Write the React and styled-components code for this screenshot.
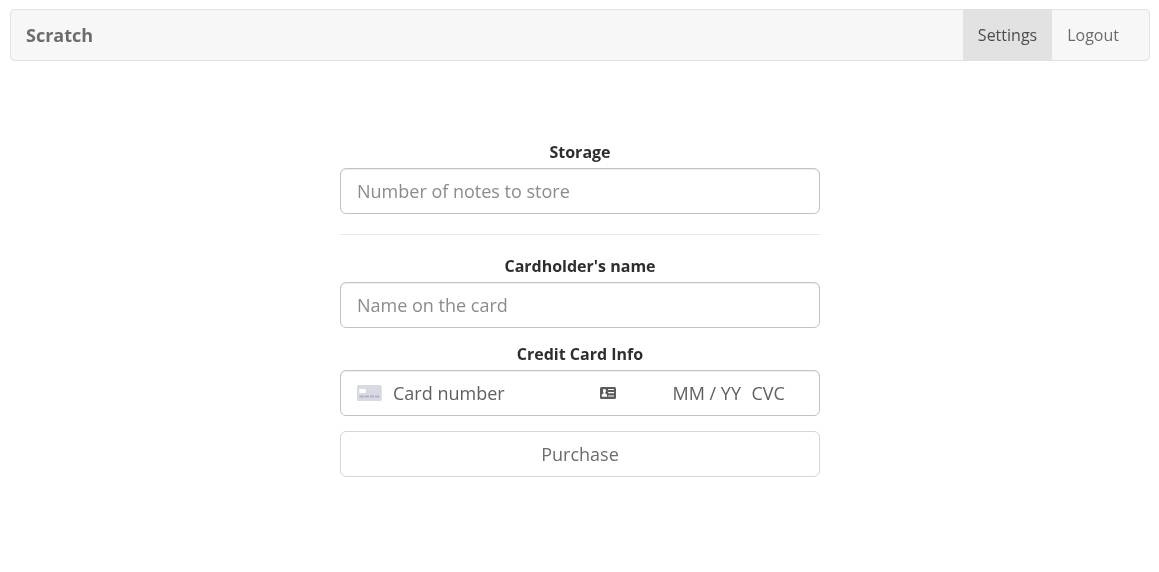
import React from "react";
import styled, { createGlobalStyle } from "styled-components";

const Global = createGlobalStyle`
  * { box-sizing: border-box; }
  body {
    margin: 0;
    background: #fff;
    color: #2e2e2e;
    font: 16px/23px "Open Sans", sans-serif;
    -webkit-font-smoothing: antialiased;
  }
`;
const Page = styled.div`
  padding: 9px 9px 0 10px;
  will-change: transform;
`;
const Navbar = styled.nav`
  display: flex;
  height: 52px;
  padding: 0 15px;
  border: 1px solid #e2e2e2;
  border-radius: 4px;
  background: #f7f7f7;
`;
const Brand = styled.a`
  margin-right: auto;
  line-height: 50px;
  font-size: 18px;
  font-weight: 700;
  color: #6c6c6c;
`;
const NavItem = styled.a`
  padding: 0 15px;
  line-height: 50px;
  color: ${(p) => (p.$active ? "#4c4c4c" : "#6c6c6c")};
  background: ${(p) => (p.$active ? "#e2e2e2" : "transparent")};
`;
const Form = styled.form`
  width: 480px;
  margin: 80px auto 0;
`;
const Group = styled.div`
  margin-bottom: 15px;
`;
const Label = styled.label`
  display: block;
  height: 22px;
  margin-bottom: 5px;
  line-height: 22px;
  font-weight: 700;
  text-align: center;
`;
const Input = styled.input`
  display: block;
  width: 100%;
  height: 46px;
  padding: 10px 16px;
  border: 1px solid #c2c2c2;
  border-radius: 6px;
  font: 18px/24px "Open Sans", sans-serif;
  box-shadow: inset 0 1px 1px rgba(0, 0, 0, 0.075);
  &::placeholder { color: #8c8c8c; opacity: 1; }
`;
const Divider = styled.hr`
  margin: 20px 0;
  border: 0;
  border-top: 1px solid #e8e8e8;
`;
const CardField = styled.div`
  display: flex;
  align-items: center;
  height: 46px;
  padding: 0 16px;
  border: 1px solid #c2c2c2;
  border-radius: 6px;
  font-size: 18px;
  color: #606060;
  box-shadow: inset 0 1px 1px rgba(0, 0, 0, 0.075);
`;
const CardNumber = styled.span`
  width: 207px;
  margin-left: 11px;
`;
const Expiry = styled.span`
  margin-left: 56.5px;
`;
const Cvc = styled.span`
  margin-left: 10.5px;
`;
const Button = styled.button`
  display: block;
  width: 100%;
  height: 46px;
  border: 1px solid #d6d6d6;
  border-radius: 6px;
  background: #fff;
  font: 18px/24px "Open Sans", sans-serif;
  color: #6c6c6c;
`;

const CardIcon = () => (
  <svg width="25" height="16" viewBox="0 0 25 16">
    <rect width="24.7" height="16" rx="1.5" fill="#d7dae2" />
    <rect x="2.3" y="4" width="6.4" height="4" rx="0.6" fill="#fff" />
    <path d="M2.500 11.500h4.200M7.700 11.500h4.200M12.900 11.500h4.200M18.100 11.500h4.200" stroke="#b0b4c6" strokeWidth="1.900" />
  </svg>
);
const ContactIcon = () => (
  <svg width="16" height="12" viewBox="0 0 16 12">
    <rect width="16" height="12" rx="1.5" fill="#5c5c5c" />
    <rect x="3" y="2" width="2.800" height="3.600" rx="1.200" fill="#fff" />
    <path d="M3.600 5h1.600v1.500l1.800.9V9.700H1.800V7.400l1.800-.9z" fill="#fff" />
    <path d="M8.200 2.500h5.800M8.200 5.700h5.800M8.200 9h5.800" stroke="#fff" strokeWidth="1.200" />
  </svg>
);

export default function App() {
  return (
    <>
      <Global />
      <Page>
        <Navbar>
          <Brand>Scratch</Brand>
          <NavItem $active>Settings</NavItem>
          <NavItem>Logout</NavItem>
        </Navbar>
        <Form>
          <Group>
            <Label>Storage</Label>
            <Input placeholder="Number of notes to store" />
          </Group>
          <Divider />
          <Group>
            <Label>Cardholder's name</Label>
            <Input placeholder="Name on the card" />
          </Group>
          <Group>
            <Label>Credit Card Info</Label>
            <CardField>
              <CardIcon />
              <CardNumber>Card number</CardNumber>
              <ContactIcon />
              <Expiry>MM / YY</Expiry>
              <Cvc>CVC</Cvc>
            </CardField>
          </Group>
          <Button type="button">Purchase</Button>
        </Form>
      </Page>
    </>
  );
}
